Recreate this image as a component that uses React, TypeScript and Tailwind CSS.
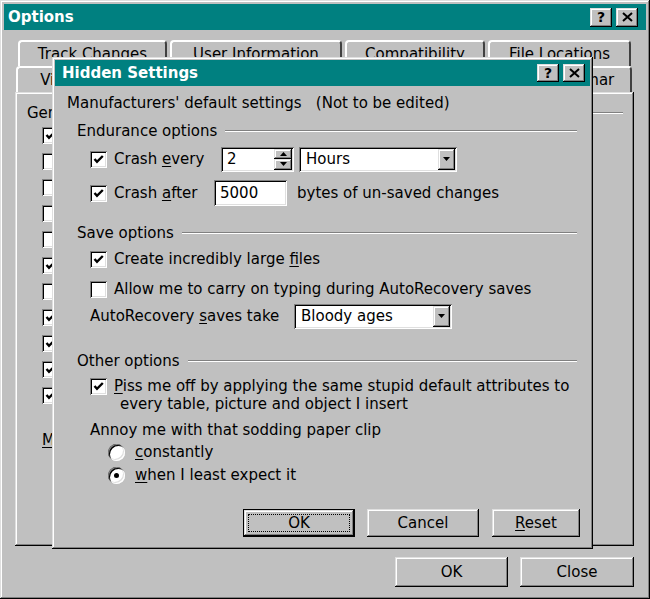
import React from "react";

const raised =
  "shadow-[inset_-1px_-1px_#000000,inset_1px_1px_#dfdfdf,inset_-2px_-2px_#808080,inset_2px_2px_#ffffff]";
const sunken =
  "shadow-[inset_1px_1px_#808080,inset_-1px_-1px_#ffffff,inset_2px_2px_#000000,inset_-2px_-2px_#dfdfdf]";

function U({ children }: { children: React.ReactNode }) {
  return <span className="underline underline-offset-2 decoration-1">{children}</span>;
}

function TitleBtns({ h }: { h: string }) {
  return (
    <div className="ml-auto flex gap-[4px]">
      <div className={`w-[22px] ${h} bg-[#c0c0c0] ${raised} flex items-center justify-center text-[14px] font-bold leading-none text-black`}>
        ?
      </div>
      <div className={`w-[22px] ${h} bg-[#c0c0c0] ${raised} flex items-center justify-center`}>
        <svg width="11" height="10" viewBox="0 0 11 10">
          <path d="M1 1 L10 9 M10 1 L1 9" stroke="#000" strokeWidth="2" />
        </svg>
      </div>
    </div>
  );
}

function Check({ checked }: { checked?: boolean }) {
  return (
    <div className={`w-[17px] h-[17px] shrink-0 bg-white ${sunken} flex items-center justify-center`}>
      {checked && (
        <svg width="11" height="11" viewBox="0 0 11 11">
          <path d="M1.5 5 L4 7.8 L9.8 2" stroke="#000" strokeWidth="2.4" fill="none" />
        </svg>
      )}
    </div>
  );
}

function Radio({ on }: { on?: boolean }) {
  return (
    <div className={`w-[17px] h-[17px] shrink-0 rounded-full bg-white ${sunken} flex items-center justify-center`}>
      {on && <div className="w-[5px] h-[5px] rounded-full bg-black" />}
    </div>
  );
}

function Sep({ label, cls }: { label: string; cls: string }) {
  return (
    <div className={`h-[20px] flex items-center ${cls}`}>
      <span className="whitespace-nowrap">{label}</span>
      <div className="flex-1 ml-[8px] h-[2px] border-t border-[#808080] border-b border-b-white" />
    </div>
  );
}

function DownArrow() {
  return (
    <svg width="7" height="4" viewBox="0 0 7 4">
      <path d="M0 0 H7 L3.5 4 Z" fill="#000" />
    </svg>
  );
}

function Combo({ w, text }: { w: string; text: string }) {
  return (
    <div className={`${w} h-[25px] bg-white ${sunken} p-[2px] flex items-stretch`}>
      <div className="flex-1 flex items-center pl-[5px]">{text}</div>
      <div className={`w-[17px] bg-[#c0c0c0] ${raised} flex items-center justify-center`}>
        <DownArrow />
      </div>
    </div>
  );
}

function Btn({
  children,
  def,
  w,
  h,
}: {
  children: React.ReactNode;
  def?: boolean;
  w: string;
  h: string;
}) {
  if (def) {
    return (
      <div className={`${w} ${h} border border-black`}>
        <div className={`h-full ${raised} flex p-[4px]`}>
          <div className="flex-1 border border-dotted border-black flex items-center justify-center">
            {children}
          </div>
        </div>
      </div>
    );
  }
  return <div className={`${w} ${h} ${raised} flex items-center justify-center`}>{children}</div>;
}

function Tab({ w, label }: { w: string; label: string }) {
  return (
    <div
      className={`${w} h-[26px] shrink-0 border-t-2 border-l-2 border-white border-r-2 border-r-[#404040] rounded-t-[4px] flex items-center justify-center whitespace-nowrap overflow-hidden`}
    >
      {label}
    </div>
  );
}

const generalOpts: boolean[] = [true, false, false, false, false, true, false, true, true, true, true];

export default function App() {
  return (
    <div className="w-[650px] h-[599px] relative overflow-hidden bg-[#c0c0c0] font-['DejaVu_Sans',sans-serif] text-[15px] text-black">
      <div className={`w-full h-full ${raised} p-[4px] flex flex-col`}>
        {/* Title bar */}
        <div className="h-[26px] bg-[#008080] flex items-center pl-[4px] pr-[8px]">
          <span className="text-white font-bold text-[15px]">Options</span>
          <TitleBtns h="h-[19px]" />
        </div>

        {/* Tabs */}
        <div className="mt-[10px] ml-[11px] w-[619px] flex flex-col">
          <div className="flex pl-[3px] gap-[3px]">
            <Tab w="w-[149px]" label="Track Changes" />
            <Tab w="w-[172px]" label="User Information" />
            <Tab w="w-[140px]" label="Compatibility" />
            <Tab w="w-[143px]" label="File Locations" />
          </div>
          <div className="flex pl-[1px]">
            <Tab w="w-[84px]" label="View" />
            <Tab w="w-[100px]" label="General" />
            <Tab w="w-[82px]" label="Edit" />
            <Tab w="w-[82px]" label="Print" />
            <Tab w="w-[80px]" label="Save" />
            <Tab w="w-[188px]" label="Spelling & Grammar" />
          </div>
          <div className={`h-[454px] ${raised} flex flex-col pt-[11px] pl-[12px] pr-[11px]`}>
            <Sep label="General options" cls="" />
            <div className="mt-[-1px] ml-[15px] flex flex-col">
              {generalOpts.map((c, i) => (
                <div key={i} className="h-[26px] flex items-center">
                  <Check checked={c} />
                </div>
              ))}
            </div>
            <div className="mt-[22px] ml-[15px] h-[20px] flex items-center">
              <U>M</U>
            </div>
          </div>
        </div>

        {/* Bottom buttons */}
        <div className="mt-[11px] flex justify-end gap-[12px] pr-[12px]">
          <Btn w="w-[113px]" h="h-[30px]">OK</Btn>
          <Btn w="w-[114px]" h="h-[30px]">Close</Btn>
        </div>
      </div>

      {/* Hidden Settings dialog */}
      <div className={`absolute left-[52px] top-[57px] w-[541px] h-[492px] bg-[#c0c0c0] ${raised} p-[3px] flex flex-col`}>
        <div className="h-[26px] bg-[#008080] flex items-center pl-[7px] pr-[5px]">
          <span className="text-white font-bold text-[15px]">Hidden Settings</span>
          <TitleBtns h="h-[18px]" />
        </div>

        <div className="mt-[7px] h-[20px] flex items-center pl-[12px] whitespace-pre">
          Manufacturers' default settings   (Not to be edited)
        </div>

        <div className="mt-[8px]">
          <Sep label="Endurance options" cls="pl-[22px] pr-[13px]" />
        </div>

        <div className="mt-[5px] h-[26px] flex items-center pl-[35px]">
          <Check checked />
          <span className="ml-[7px] w-[107px] whitespace-nowrap">
            Crash <U>e</U>very
          </span>
          <div className={`w-[73px] h-[25px] bg-white ${sunken} p-[2px] flex items-stretch`}>
            <div className="flex-1 flex items-center pl-[4px]">2</div>
            <div className="w-[18px] flex flex-col">
              <div className={`flex-1 bg-[#c0c0c0] ${raised} flex items-center justify-center`}>
                <svg width="7" height="4" viewBox="0 0 7 4">
                  <path d="M0 4 H7 L3.5 0 Z" fill="#000" />
                </svg>
              </div>
              <div className={`flex-1 bg-[#c0c0c0] ${raised} flex items-center justify-center`}>
                <DownArrow />
              </div>
            </div>
          </div>
          <div className="ml-[5px]">
            <Combo w="w-[158px]" text="Hours" />
          </div>
        </div>

        <div className="mt-[8px] h-[26px] flex items-center pl-[35px]">
          <Check checked />
          <span className="ml-[7px] w-[100px] whitespace-nowrap">
            Crash <U>a</U>fter
          </span>
          <div className={`w-[73px] h-[26px] bg-white ${sunken} flex items-center pl-[6px]`}>5000</div>
          <span className="ml-[10px] whitespace-nowrap">bytes of un-saved changes</span>
        </div>

        <div className="mt-[17px]">
          <Sep label="Save options" cls="pl-[22px] pr-[13px]" />
        </div>

        <div className="mt-[6px] h-[20px] flex items-center pl-[35px]">
          <Check checked />
          <span className="ml-[7px] whitespace-nowrap">
            Create incredibly large <U>f</U>iles
          </span>
        </div>

        <div className="mt-[10px] h-[20px] flex items-center pl-[35px]">
          <Check />
          <span className="ml-[7px] whitespace-nowrap">Allow me to carry on typing during AutoRecovery saves</span>
        </div>

        <div className="mt-[4px] h-[26px] flex items-center pl-[35px]">
          <span className="w-[204px] whitespace-nowrap">
            AutoRecovery <U>s</U>aves take
          </span>
          <Combo w="w-[158px]" text="Bloody ages" />
        </div>

        <div className="mt-[22px]">
          <Sep label="Other options" cls="pl-[22px] pr-[13px]" />
        </div>

        <div className="mt-[6px] flex pl-[35px] leading-[18px]">
          <div className="pt-[1px]">
            <Check checked />
          </div>
          <div className="ml-[7px] flex flex-col">
            <span className="whitespace-nowrap">
              <U>P</U>iss me off by applying the same stupid default attributes to
            </span>
            <span className="whitespace-nowrap pl-[6px]">every table, picture and object I insert</span>
          </div>
        </div>

        <div className="mt-[7px] h-[20px] flex items-center pl-[35px] whitespace-nowrap">
          Annoy me with that sodding paper clip
        </div>

        <div className="mt-[2px] h-[20px] flex items-center pl-[53px]">
          <Radio />
          <span className="ml-[10px]">
            <U>c</U>onstantly
          </span>
        </div>

        <div className="mt-[3px] h-[20px] flex items-center pl-[53px]">
          <Radio on />
          <span className="ml-[10px] whitespace-nowrap">
            <U>w</U>hen I least expect it
          </span>
        </div>

        <div className="mt-[24px] flex pl-[188px]">
          <Btn def w="w-[112px]" h="h-[28px]">
            OK
          </Btn>
          <div className="ml-[12px]">
            <Btn w="w-[112px]" h="h-[28px]">
              Cancel
            </Btn>
          </div>
          <div className="ml-[13px]">
            <Btn w="w-[88px]" h="h-[28px]">
              <span>
                <U>R</U>eset
              </span>
            </Btn>
          </div>
        </div>
      </div>
    </div>
  );
}
